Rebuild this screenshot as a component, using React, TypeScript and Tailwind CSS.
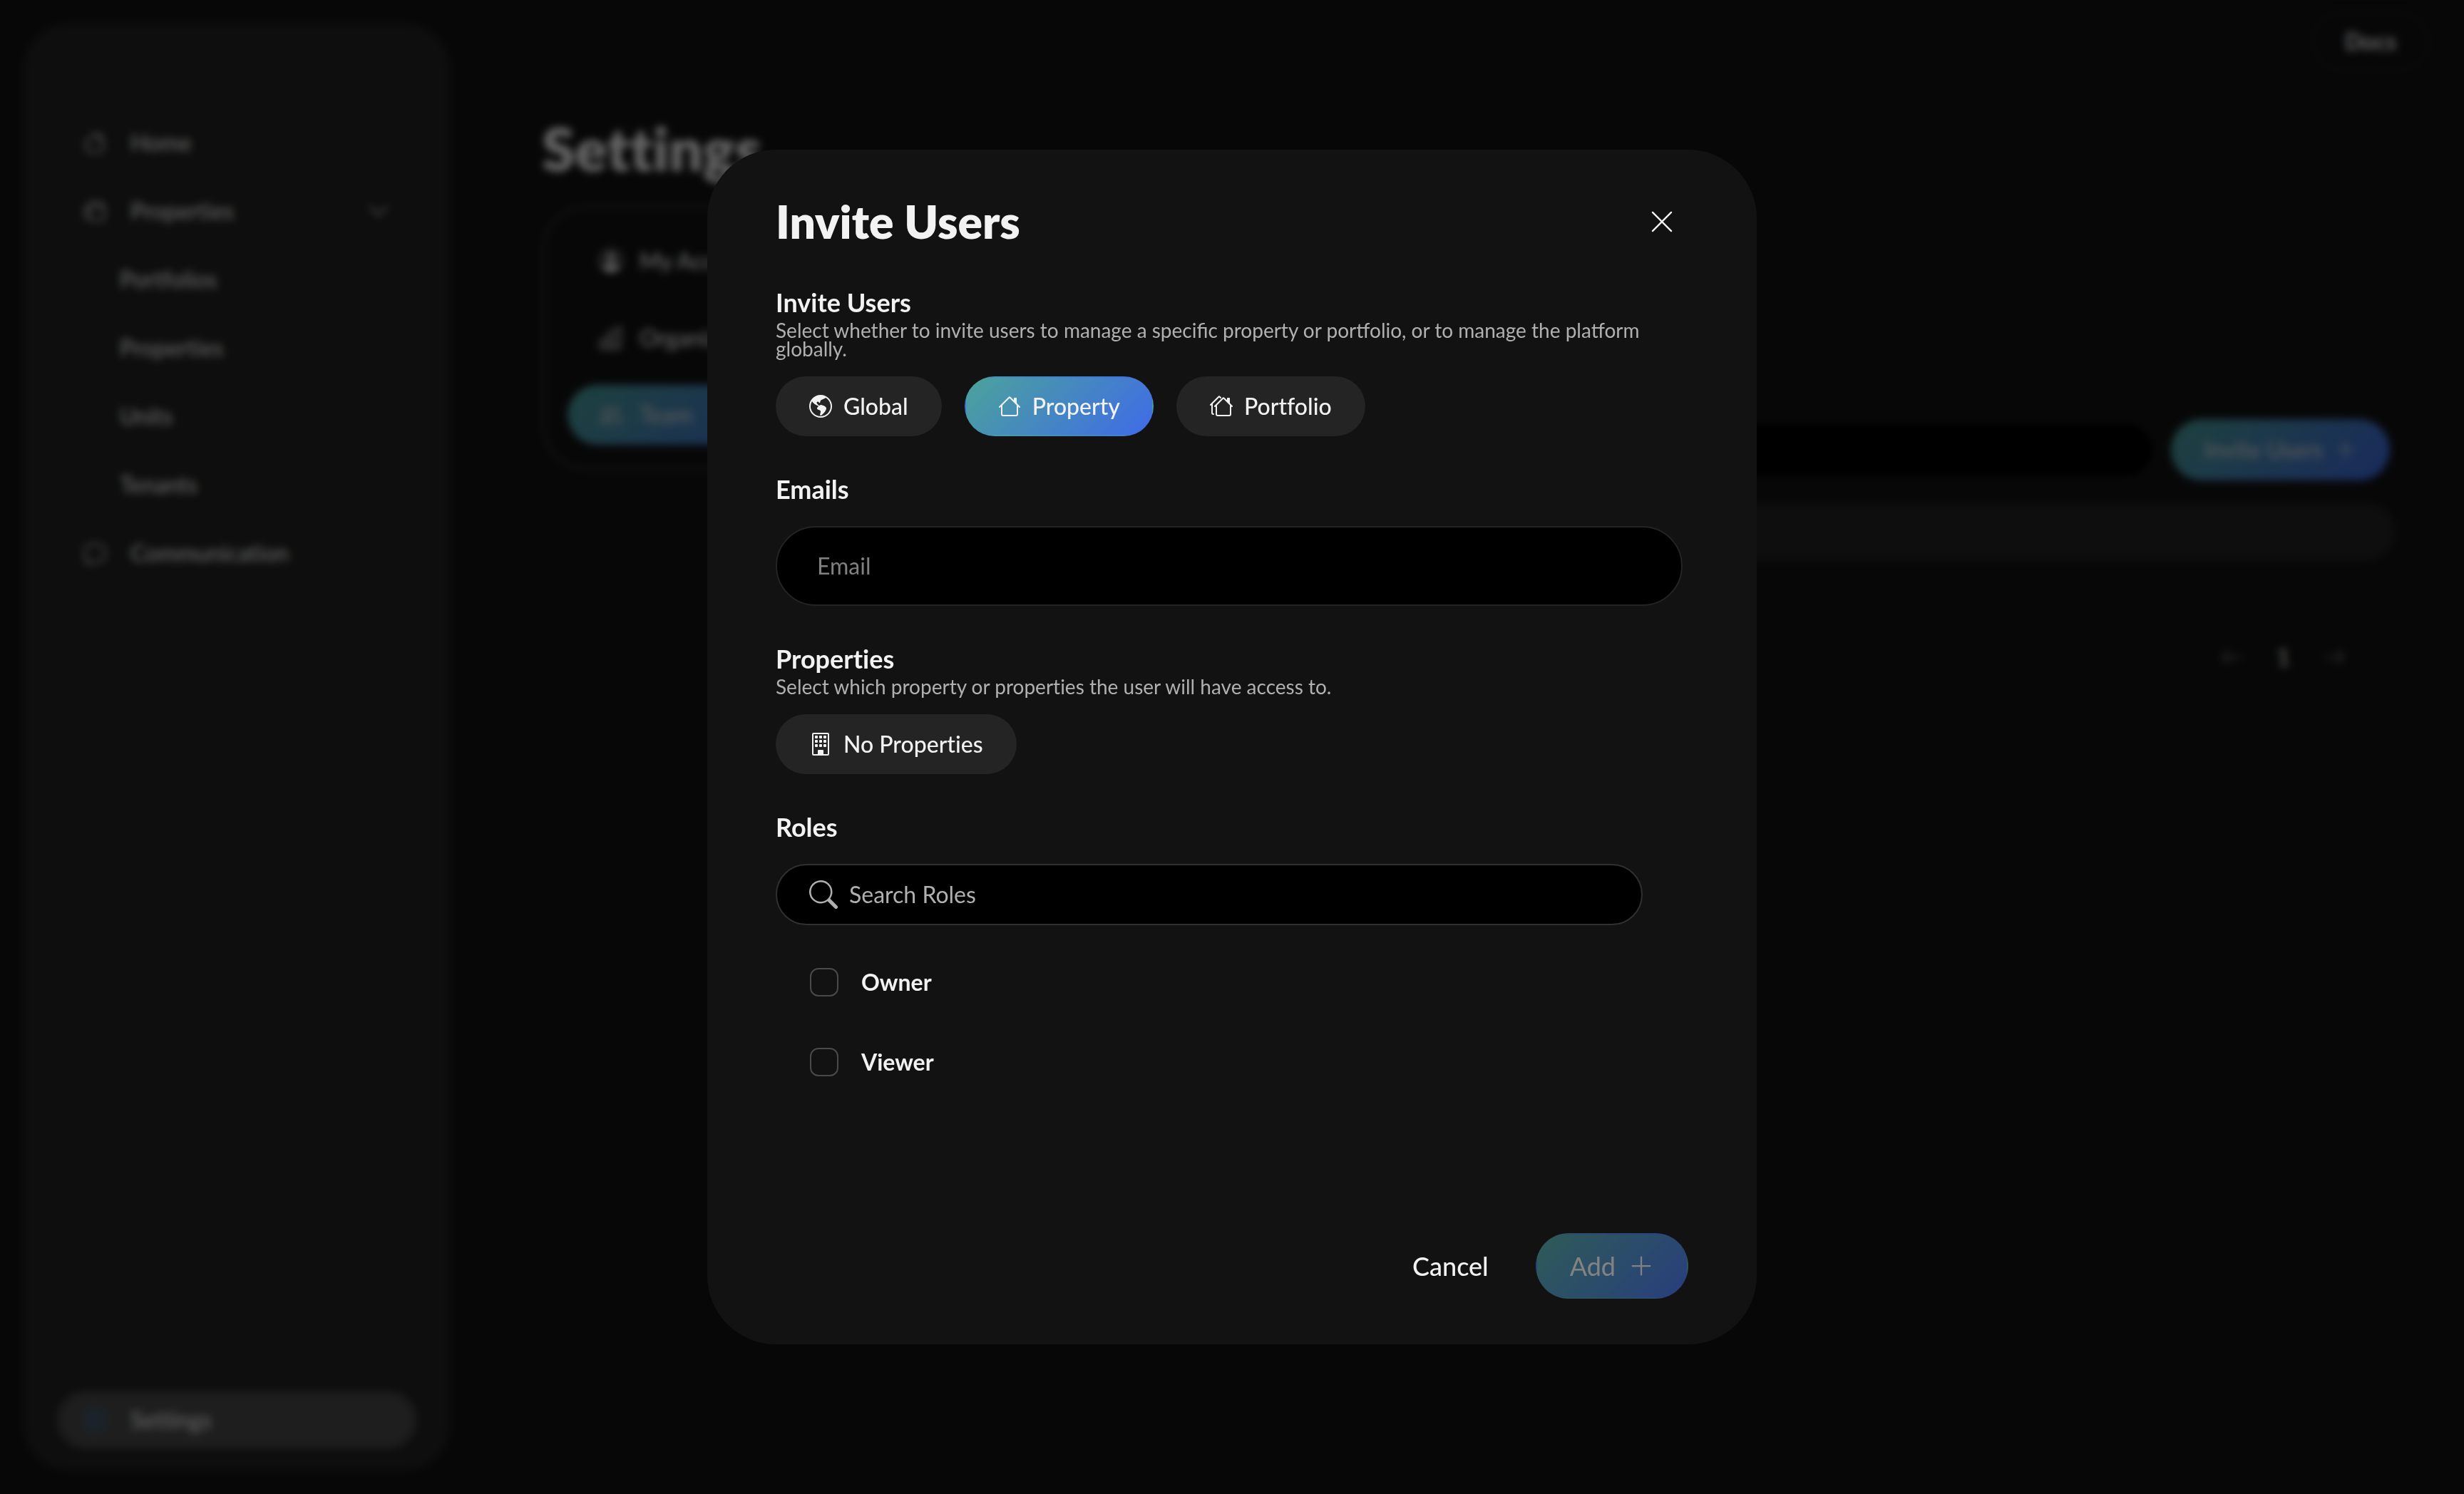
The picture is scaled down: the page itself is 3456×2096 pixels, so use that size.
import { useState, type ReactNode } from "react";
import {
  BsArrowLeft,
  BsArrowRight,
  BsBuilding,
  BsBuildings,
  BsChat,
  BsChevronDown,
  BsGear,
  BsGlobeAmericas,
  BsHouse,
  BsHouses,
  BsPeople,
  BsPersonCircle,
  BsPlusLg,
  BsSearch,
  BsXLg,
} from "react-icons/bs";

const gradient = "bg-linear-[135deg,#4ba39b,#3f6be8]";

function NavItem({ icon, label, trailing, active }: { icon: ReactNode; label: string; trailing?: ReactNode; active?: boolean }) {
  return (
    <a
      href="#"
      className={`flex h-20 items-center gap-[34px] rounded-full px-[37px] ${active ? "bg-[#4b4b4b]" : ""}`}
    >
      {icon}
      <span className="flex-1">{label}</span>
      {trailing}
    </a>
  );
}

function Sidebar() {
  return (
    <nav className="m-8 flex w-[600px] shrink-0 flex-col rounded-[64px] bg-[#232323] px-12 pt-32 pb-8">
      <div className="flex flex-col gap-4">
        <NavItem icon={<BsHouse className="size-8" />} label="Home" />
        <NavItem
          icon={<BsHouses className="size-8" />}
          label="Properties"
          trailing={<BsChevronDown className="size-8" />}
        />
        {["Portfolios", "Properties", "Units", "Tenants"].map((name) => (
          <a key={name} href="#" className="flex h-20 items-center pl-22">
            {name}
          </a>
        ))}
        <NavItem icon={<BsChat className="size-8" />} label="Communication" />
      </div>
      <div className="mt-auto">
        <NavItem active icon={<BsGear className="size-8 text-[#2f7fc0]" />} label="Settings" />
      </div>
    </nav>
  );
}

function TabItem({ icon, label, active }: { icon: ReactNode; label: string; active?: boolean }) {
  return (
    <button
      type="button"
      className={`flex h-[84px] items-center gap-6 rounded-full px-[45px] ${active ? `${gradient} text-[#e0e0e0]` : ""}`}
    >
      {icon}
      {label}
    </button>
  );
}

function SettingsPage() {
  return (
    <div className="flex min-h-screen bg-[#121212] text-[32px] leading-10 font-medium text-white">
      <Sidebar />
      <div className="flex min-w-0 flex-1 flex-col">
        <header className="flex justify-end pt-4 pr-12">
          <a href="#" className="flex h-[84px] items-center rounded-full border-4 border-[#1a1a1a] px-[43px] font-bold">
            Docs
          </a>
        </header>
        <main className="flex flex-col pt-[60px] pr-24 pl-24">
          <h1 className="text-[84px] leading-[96px] font-extrabold">Settings</h1>
          <div className="mt-8 flex items-start gap-12">
            <div className="flex w-[440px] flex-col gap-6 rounded-[64px] border-4 border-[#303030] px-8 py-8">
              <TabItem icon={<BsPersonCircle className="size-8" />} label="My Account" />
              <TabItem icon={<BsBuildings className="size-8" />} label="Organization" />
              <TabItem active icon={<BsPeople className="size-8" />} label="Team" />
            </div>
            <div className="flex flex-1 flex-col pt-[300px]">
              <div className="flex items-center gap-5 pr-2">
                <input
                  aria-label="Search team"
                  className="h-[86px] min-w-0 flex-1 rounded-full border-4 border-[#222222] bg-black px-12"
                />
                <button
                  type="button"
                  className={`flex h-[86px] items-center gap-4 rounded-full px-[46px] text-[#e0e0e0] ${gradient}`}
                >
                  Invite Users
                  <BsPlusLg className="size-8" />
                </button>
              </div>
              <div className="mt-8 h-20 rounded-full bg-[#232323]" />
              <div className="mt-[116px] flex items-center justify-end gap-[46px] pr-[70px] text-[#909090]">
                <button type="button" aria-label="Previous page"><BsArrowLeft className="size-8" /></button>
                <span className="text-white">1</span>
                <button type="button" aria-label="Next page"><BsArrowRight className="size-8" /></button>
              </div>
            </div>
          </div>
        </main>
      </div>
    </div>
  );
}

function Pill({ icon, label, active, onClick }: { icon: ReactNode; label: string; active?: boolean; onClick?: () => void }) {
  return (
    <button
      type="button"
      onClick={onClick}
      className={`flex h-[84px] items-center gap-4 rounded-full border-2 border-transparent px-[45px] font-medium ${active ? gradient : "bg-[#242424]"}`}
    >
      {icon}
      {label}
    </button>
  );
}

const scopes = [
  { name: "Global", icon: <BsGlobeAmericas className="size-8" /> },
  { name: "Property", icon: <BsHouse className="size-8" /> },
  { name: "Portfolio", icon: <BsHouses className="size-8" /> },
];

function InviteDialog() {
  const [scope, setScope] = useState("Property");
  return (
    <div
      role="dialog"
      aria-modal="true"
      aria-labelledby="invite-title"
      className="flex h-[80vh] w-[1472px] max-w-full flex-col rounded-[96px] bg-[#121212] pt-[61px] pb-16 pl-24 text-[32px] leading-10 text-[#f2f2f2]"
    >
      <div className="flex items-center justify-between pr-24">
        <h2 id="invite-title" className="text-[64px] leading-[80px] font-extrabold">Invite Users</h2>
        <button type="button" aria-label="Close" className="flex size-[74px] items-center justify-center">
          <BsXLg className="size-[38px]" />
        </button>
      </div>

      <div className="mt-[51px] flex flex-1 flex-col gap-[52px] pr-[104px]">
        <section>
          <h3 className="text-[36px] leading-[44px] font-bold">Invite Users</h3>
          <p className="mt-1 text-[28px] leading-[26px] text-[#b0b0b0] [font-variant-ligatures:normal]">
            Select whether to invite users to manage a specific property or portfolio, or to manage the platform globally.
          </p>
          <div className="mt-[26px] flex gap-8">
            {scopes.map((s) => (
              <Pill key={s.name} icon={s.icon} label={s.name} active={scope === s.name} onClick={() => setScope(s.name)} />
            ))}
          </div>
        </section>

        <section>
          <label htmlFor="email" className="block text-[36px] leading-[44px] font-bold">Emails</label>
          <input
            id="email"
            type="email"
            placeholder="Email"
            className="mt-[30px] block h-28 w-full rounded-full border-2 border-[#242424] bg-black px-14 outline-none placeholder:text-[#808080]"
          />
        </section>

        <section>
          <h3 className="text-[36px] leading-[44px] font-bold">Properties</h3>
          <p className="mt-1 text-[28px] leading-[26px] text-[#b0b0b0]">
            Select which property or properties the user will have access to.
          </p>
          <div className="mt-[26px] flex">
            <Pill icon={<BsBuilding className="size-8" />} label="No Properties" />
          </div>
        </section>

        <section>
          <label htmlFor="role-search" className="block text-[36px] leading-[44px] font-bold">Roles</label>
          <div className="mt-[30px] mr-14 flex h-[86px] items-center gap-4 rounded-full border-2 border-[#303030] bg-black pr-12 pl-[45px] text-[#b0b0b0]">
            <BsSearch className="size-10" />
            <input
              id="role-search"
              type="search"
              placeholder="Search Roles"
              className="min-w-0 flex-1 bg-transparent outline-none placeholder:text-[#b0b0b0]"
            />
          </div>
          <div className="mt-6 pl-12">
            {["Owner", "Viewer"].map((role) => (
              <label key={role} className="flex h-28 items-center gap-8 font-bold">
                <input
                  type="checkbox"
                  className="size-10 appearance-none rounded-xl border-2 border-[#4a4a4a] checked:bg-[#3f6be8]"
                />
                {role}
              </label>
            ))}
          </div>
        </section>
      </div>

      <div className="flex items-center justify-end gap-8 pr-24 text-[36px] leading-[44px]">
        <button type="button" className="h-[92px] px-[34px] font-medium">Cancel</button>
        <button
          type="button"
          disabled
          className={`flex h-[92px] items-center gap-[18px] rounded-full border-2 border-transparent px-[46px] opacity-50 ${gradient}`}
        >
          Add
          <BsPlusLg className="size-9" />
        </button>
      </div>
    </div>
  );
}

export default function App() {
  return (
    <div className="font-['Lato',sans-serif] [font-variant-ligatures:no-common-ligatures]">
      <SettingsPage />
      <div className="fixed inset-0 flex items-center justify-center bg-black/60 backdrop-blur-[6px]">
        <InviteDialog />
      </div>
    </div>
  );
}
